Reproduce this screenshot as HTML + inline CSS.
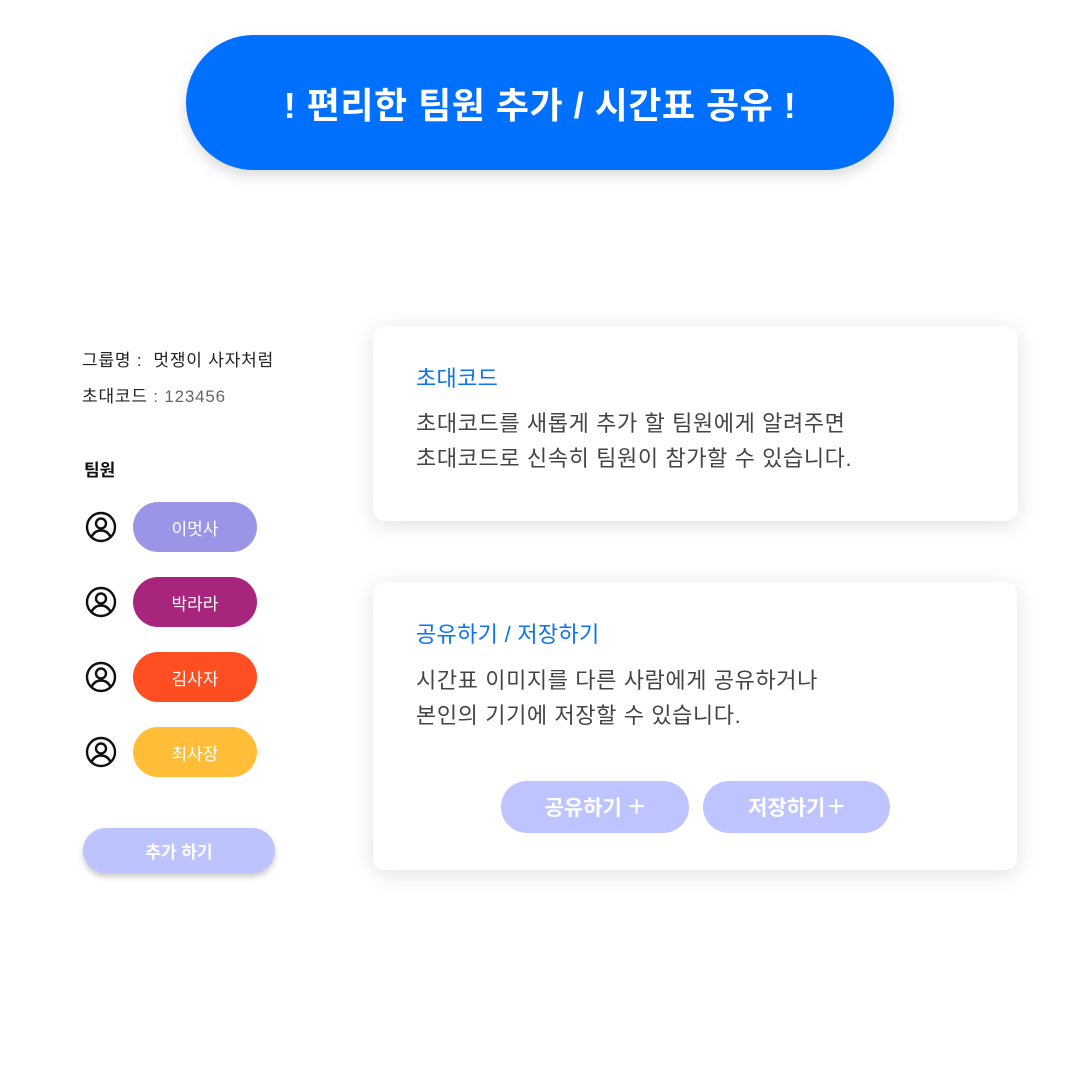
<!DOCTYPE html>
<html><head><meta charset="utf-8"><style>
body{margin:0;width:1080px;height:1080px;background:#fff;position:relative;overflow:hidden;font-family:"Liberation Sans","Noto Sans CJK KR",sans-serif}
.a{position:absolute}
.banner{left:186px;top:35px;width:708px;height:135px;border-radius:68px;background:#0270fe;color:#fff;font-size:36px;font-weight:bold;display:flex;align-items:center;justify-content:center;box-shadow:0 6px 14px rgba(0,0,0,.15);letter-spacing:0.5px}
.card{background:#fff;border-radius:12px;box-shadow:0 4px 22px rgba(0,0,0,.12)}
.h{color:#0a73f0;font-size:22px;letter-spacing:0.3px}
.p{color:#444;font-size:22px;line-height:35px;letter-spacing:0.6px}
.pill{width:124px;height:50px;border-radius:25px;color:#fff;font-size:17px;display:flex;align-items:center;justify-content:center;left:133px}
.ic{left:85px;width:32px;height:32px}
.btn{height:52px;border-radius:26px;background:#bdc4ff;color:#fff;font-size:21px;font-weight:bold;display:flex;align-items:center;justify-content:center}
</style></head><body>
<div class="a banner">! 편리한 팀원 추가 / 시간표 공유 !</div>
<div class="a" style="left:82px;top:346px;font-size:17px;color:#222;letter-spacing:0.8px">그룹명 :&nbsp; 멋쟁이 사자처럼</div>
<div class="a" style="left:82px;top:382px;font-size:17px;color:#222;letter-spacing:0.8px">초대코드 <span style="color:#666">: 123456</span></div>
<div class="a" style="left:84px;top:456px;font-size:17px;font-weight:bold;color:#111">팀원</div>
<svg class="a ic" style="top:511px" viewBox="0 0 32 32" fill="none" stroke="#111" stroke-width="2.4"><circle cx="16" cy="16" r="14"/><circle cx="16" cy="12.5" r="5"/><path d="M6.5 26c2-4.5 5.5-6.5 9.5-6.5s7.5 2 9.5 6.5"/></svg>
<svg class="a ic" style="top:586px" viewBox="0 0 32 32" fill="none" stroke="#111" stroke-width="2.4"><circle cx="16" cy="16" r="14"/><circle cx="16" cy="12.5" r="5"/><path d="M6.5 26c2-4.5 5.5-6.5 9.5-6.5s7.5 2 9.5 6.5"/></svg>
<svg class="a ic" style="top:661px" viewBox="0 0 32 32" fill="none" stroke="#111" stroke-width="2.4"><circle cx="16" cy="16" r="14"/><circle cx="16" cy="12.5" r="5"/><path d="M6.5 26c2-4.5 5.5-6.5 9.5-6.5s7.5 2 9.5 6.5"/></svg>
<svg class="a ic" style="top:736px" viewBox="0 0 32 32" fill="none" stroke="#111" stroke-width="2.4"><circle cx="16" cy="16" r="14"/><circle cx="16" cy="12.5" r="5"/><path d="M6.5 26c2-4.5 5.5-6.5 9.5-6.5s7.5 2 9.5 6.5"/></svg>
<div class="a pill" style="top:502px;background:#9b95e8">이멋사</div>
<div class="a pill" style="top:577px;background:#a8257d">박라라</div>
<div class="a pill" style="top:652px;background:#ff4f22">김사자</div>
<div class="a pill" style="top:727px;background:#ffbd38">최사장</div>
<div class="a" style="left:83px;top:828px;width:192px;height:45px;border-radius:23px;background:#bcc3fd;color:#fff;font-size:17px;font-weight:bold;display:flex;align-items:center;justify-content:center;box-shadow:0 4px 6px rgba(0,0,0,.2)">추가 하기</div>
<div class="a card" style="left:373px;top:326px;width:645px;height:195px"></div>
<div class="a h" style="left:416px;top:361px">초대코드</div>
<div class="a p" style="left:416px;top:406px">초대코드를 새롭게 추가 할 팀원에게 알려주면<br>초대코드로 신속히 팀원이 참가할 수 있습니다.</div>
<div class="a card" style="left:373px;top:582px;width:644px;height:288px"></div>
<div class="a h" style="left:416px;top:617px">공유하기 / 저장하기</div>
<div class="a p" style="left:416px;top:663px">시간표 이미지를 다른 사람에게 공유하거나<br>본인의 기기에 저장할 수 있습니다.</div>
<div class="a btn" style="left:501px;top:781px;width:188px">공유하기 <span style="font-weight:normal;font-size:30px;margin-left:6px">+</span></div>
<div class="a btn" style="left:703px;top:781px;width:187px">저장하기<span style="font-weight:normal;font-size:30px;margin-left:2px">+</span></div>
</body></html>
